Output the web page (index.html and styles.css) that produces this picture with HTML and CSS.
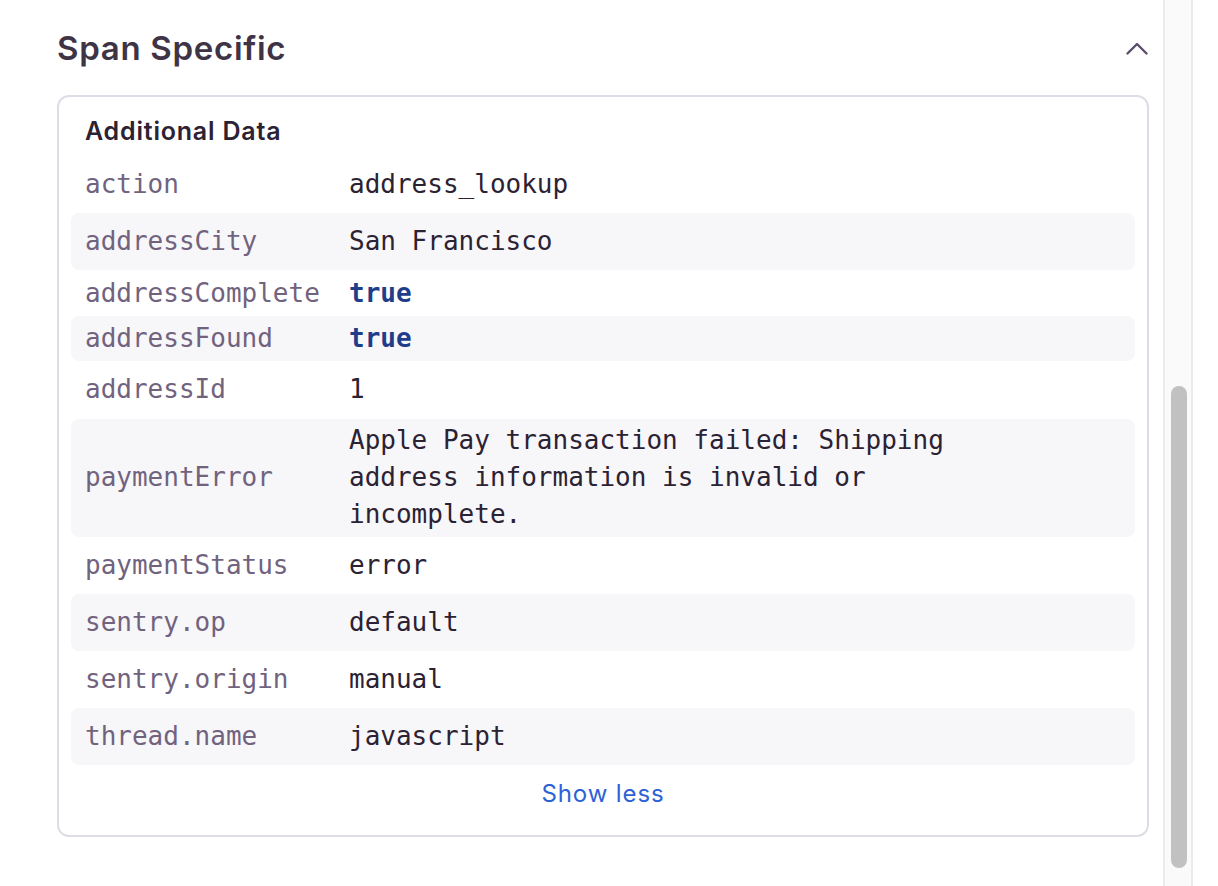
FILE: index.html
```html
<!DOCTYPE html>
<html lang="en">
<head>
<meta charset="utf-8">
<title>Span Specific</title>
<link rel="stylesheet" href="styles.css">
</head>
<body>
<div class="page">
  <main class="content">
    <header class="section-head">
      <h2 class="section-title">Span Specific</h2>
      <svg class="chevron" width="22" height="14" viewBox="0 0 22 14" aria-hidden="true">
        <polyline points="1.5,12.5 11,3 20.5,12.5" fill="none" stroke="#5b4d6b" stroke-width="2.4" stroke-linecap="round" stroke-linejoin="round"/>
      </svg>
    </header>
    <section class="card">
      <h3 class="card-title">Additional Data</h3>
      <div class="rows">
        <div class="row"><span class="key">action</span><span class="val">address_lookup</span></div>
        <div class="row alt"><span class="key">addressCity</span><span class="val">San Francisco</span></div>
        <div class="row bool"><span class="key">addressComplete</span><span class="val bool-val">true</span></div>
        <div class="row alt bool"><span class="key">addressFound</span><span class="val bool-val">true</span></div>
        <div class="row"><span class="key">addressId</span><span class="val">1</span></div>
        <div class="row alt"><span class="key">paymentError</span><span class="val">Apple Pay transaction failed: Shipping address information is invalid or incomplete.</span></div>
        <div class="row"><span class="key">paymentStatus</span><span class="val">error</span></div>
        <div class="row alt"><span class="key">sentry.op</span><span class="val">default</span></div>
        <div class="row"><span class="key">sentry.origin</span><span class="val">manual</span></div>
        <div class="row alt"><span class="key">thread.name</span><span class="val">javascript</span></div>
      </div>
      <div class="show-less"><a class="show-less-link">Show less</a></div>
    </section>
  </main>
  <div class="scrollbar"><div class="thumb"></div></div>
</div>
</body>
</html>
```

FILE: styles.css
```css
* { box-sizing: border-box; }
html, body { margin: 0; padding: 0; background: #ffffff; }
body { font-family: Inter, "Noto Sans", "Liberation Sans", sans-serif; color: #2b2233; }

.page {
  display: flex;
  height: 886px;
  overflow: hidden;
}

.content {
  width: 1163px;
  flex: none;
  padding: 0 14px 0 57px;
}

.section-head {
  display: flex;
  align-items: center;
  justify-content: space-between;
  padding-top: 28px;
  height: 68px;
  margin-bottom: 27px;
}

.section-title {
  margin: 0;
  font-size: 33px;
  line-height: 40px;
  font-weight: 600;
  color: #3e3446;
  letter-spacing: 0.7px;
}

.chevron { display: block; margin-right: 1px; }

.card {
  border: 2px solid #e0dce5;
  border-radius: 12px;
  padding: 18px 12px 25px;
}

.card-title {
  margin: 0 0 9px;
  padding-left: 14px;
  font-size: 25px;
  line-height: 32px;
  font-weight: 600;
  color: #2b2233;
  letter-spacing: 0.8px;
}

.rows { display: flex; flex-direction: column; }

.row {
  display: grid;
  grid-template-columns: 264px 1fr;
  align-items: center;
  min-height: 57.2px;
  padding: 3.5px 14px;
  border-radius: 8px;
  font-family: "DejaVu Sans Mono", "Liberation Mono", monospace;
  font-size: 26px;
  line-height: 37px;
}

.row.alt { background: #f7f6f9; }
.row.bool { min-height: 45.5px; }

.key { color: #71637e; white-space: nowrap; }
.val { color: #2b2233; max-width: 650px; }
.bool-val { color: #1f3d8a; font-weight: 700; }

.show-less {
  display: flex;
  justify-content: center;
  margin-top: 13px;
}

.show-less-link {
  font-size: 24px;
  line-height: 32px;
  color: #2c62d6;
  letter-spacing: 0.9px;
  cursor: pointer;
}

.scrollbar {
  width: 30px;
  flex: none;
  background: #fafafa;
  border-left: 2px solid #ebebeb;
  border-right: 2px solid #ebebeb;
  padding: 386px 0 0 6px;
}

.thumb {
  width: 16px;
  height: 482px;
  border-radius: 8px;
  background: #c1c1c1;
}
```
